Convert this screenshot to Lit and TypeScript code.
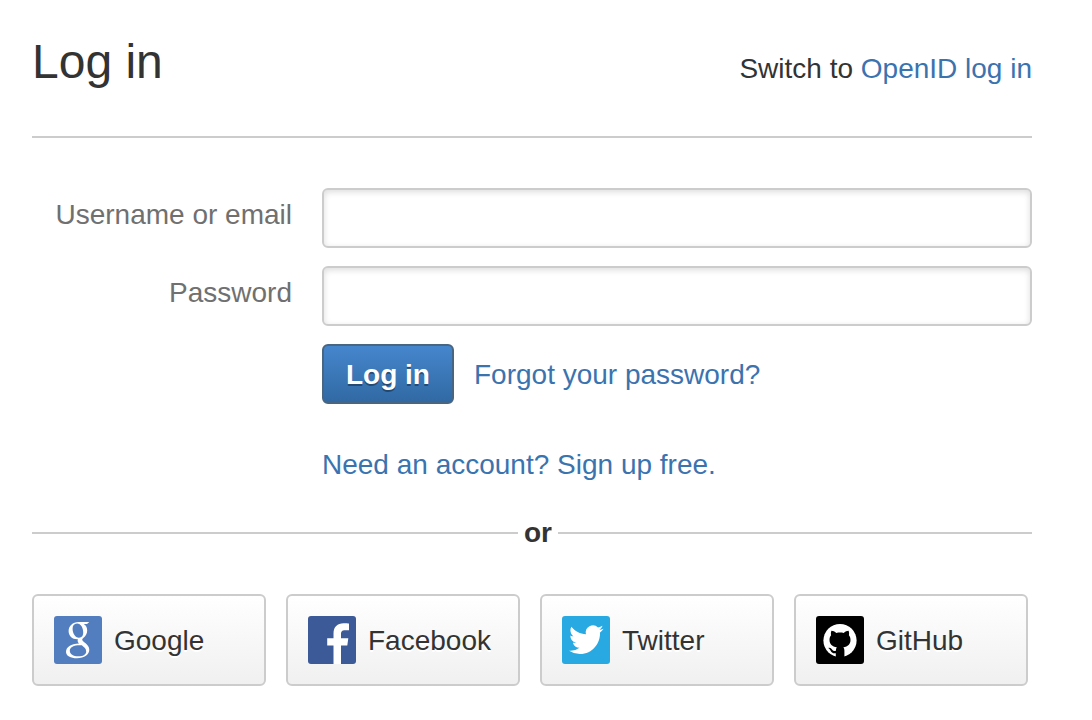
import { LitElement, html, css, svg } from "lit";
import { customElement } from "lit/decorators.js";

const providers = [
  {
    name: "Google",
    icon: svg`<rect width="48" height="48" rx="3" fill="#527dbf"/>
      <path fill="#fff" fill-rule="evenodd" d="M24.500 6H35.300L33 8H29.800C32.200 9.600 33.200 11.800 33.200 14.600C33.200 18 31.500 20.200 29.500 21.800C27.800 23.100 27.800 24.200 29.400 25.500C32.500 28 35.300 30 35.300 33.800C35.300 38.600 30.500 42.300 23 42.300C16.500 42.300 12 39.800 12 36C12 31 17 28.200 25 27.600C23.700 26.200 23.300 24.800 23.900 23.200C18.500 23.600 14.600 19.800 14.600 15.200C14.600 10 18.700 6 24.500 6ZM23 7.500C20 7.500 18.600 9.600 18.600 12.800C18.600 17.200 21 21.700 25 21.700C28 21.700 29.200 19.400 29.200 16.500C29.200 12 27 7.500 23 7.500ZM26 29.200C19.500 29.200 15.800 31.200 15.800 34.800C15.800 38.300 19.300 40.300 24.300 40.300C29.300 40.300 32.200 38.400 32.200 35.400C32.200 32.700 30.200 31.200 27.800 29.300Z"/>`,
  },
  {
    name: "Facebook",
    icon: svg`<rect width="48" height="48" rx="3" fill="#3c5998"/>
      <path fill="#fff" d="M25.500 48V29.500H19.200V22.300H25.500V17.500C25.500 11 29.500 7.300 35.500 7.300C38 7.300 40 7.400 41 7.600V14.200H37.200C33.800 14.200 33 15.700 33 18.200V22.300H40.300L39.300 29.500H33V48Z"/>`,
  },
  {
    name: "Twitter",
    icon: svg`<rect width="48" height="48" rx="3" fill="#28a9e2"/>
      <path fill="#fff" transform="translate(7 6) scale(1.440 1.470)" d="M23.953 4.570a10 10 0 01-2.825.775 4.958 4.958 0 002.163-2.723c-.951.555-2.005.959-3.127 1.184a4.920 4.920 0 00-8.384 4.482C7.690 8.095 4.067 6.130 1.640 3.162a4.822 4.822 0 00-.666 2.475c0 1.710.870 3.213 2.188 4.096a4.904 4.904 0 01-2.228-.616v.060a4.923 4.923 0 003.946 4.827 4.996 4.996 0 01-2.212.085 4.936 4.936 0 004.604 3.417 9.867 9.867 0 01-6.102 2.105c-.390 0-.779-.023-1.170-.067a13.995 13.995 0 007.557 2.209c9.053 0 13.998-7.496 13.998-13.985 0-.210 0-.420-.015-.630A9.935 9.935 0 0024 4.590z"/>`,
  },
  {
    name: "GitHub",
    icon: svg`<rect width="48" height="48" rx="3" fill="#000"/>
      <circle cx="24" cy="24.500" r="16.600" fill="#fff"/>
      <path d="M15.400 14.800C17 14.800 18.800 15.700 20.300 16.900C22.600 16.400 25.400 16.400 27.700 16.900C29.200 15.700 31 14.800 32.600 14.800C33.200 16.400 33.200 18 32.900 19.300C34 20.600 34.500 22 34.500 23.800C34.500 28.600 31.800 30.600 27.400 31.300C28.100 32.200 28.400 33.200 28.400 34.400V42H19.800V37.200C16.800 37.600 15.500 36.400 14.500 34.400C13.900 33.200 13.200 32.500 12.300 31.900C13.900 31.300 15.300 32.400 16.200 33.700C17.100 35 18.300 35.300 19.900 34.700C19.900 33.300 20.200 32.200 20.800 31.300C16.300 30.600 13.500 28.600 13.500 23.800C13.500 22 14 20.600 15.100 19.300C14.800 18 14.800 16.400 15.400 14.800Z"/>`,
  },
];

@customElement("app-root")
export class AppRoot extends LitElement {
  static styles = css`
    :host {
      display: block;
      box-sizing: border-box;
      padding: 34px 60px 32px 32px;
      background: #fff;
      color: #333;
      font-family: "Liberation Sans", Arial, sans-serif;
      font-size: 28px;
      line-height: 36px;
    }
    a {
      color: #3b73af;
      text-decoration: none;
    }
    .head {
      display: flex;
      align-items: baseline;
      justify-content: space-between;
      padding-bottom: 46px;
      border-bottom: 2px solid #ccc;
    }
    .title {
      margin: 0;
      font-size: 48px;
      font-weight: normal;
      line-height: 56px;
    }
    .switch {
      margin: 0;
    }
    .form {
      display: grid;
      grid-template-columns: 260px 1fr;
      gap: 18px 30px;
      padding-top: 50px;
    }
    .label {
      color: #707070;
      line-height: 54px;
      text-align: right;
      white-space: nowrap;
    }
    .field {
      box-sizing: border-box;
      width: 100%;
      height: 60px;
      padding: 0 12px;
      border: 2px solid #ccc;
      border-radius: 6px;
      background: #fff;
      box-shadow: inset 0 2px 6px rgba(0, 0, 0, 0.14);
      color: #333;
      font: inherit;
    }
    .actions {
      grid-column: 2;
      display: flex;
      align-items: baseline;
      gap: 20px;
    }
    .submit {
      height: 60px;
      padding: 2px 22px 0;
      border: 2px solid #486581;
      border-radius: 6px;
      background: linear-gradient(#4687ce, #3068a2);
      background-origin: border-box;
      color: #fff;
      font: inherit;
      font-weight: bold;
      text-shadow: 0 2px 0 rgba(0, 0, 0, 0.35);
      white-space: nowrap;
    }
    .signup {
      grid-column: 2;
      margin: 25px 0 0;
    }
    .or {
      display: flex;
      align-items: center;
      gap: 6px;
      margin: 32px 0 43px;
      font-weight: bold;
    }
    .or::before,
    .or::after {
      content: "";
      height: 2px;
      background: #ccc;
    }
    .or::before {
      flex: 0 0 calc(50% - 14px);
    }
    .or::after {
      flex: 1;
    }
    .providers {
      display: grid;
      grid-template-columns: repeat(4, 1fr);
      gap: 20px;
      padding-right: 4px;
    }
    .provider {
      display: flex;
      align-items: center;
      gap: 12px;
      padding: 20px;
      border: 2px solid #ccc;
      border-radius: 6px;
      background: linear-gradient(#fff, #f0f0f0);
      color: #333;
      font: inherit;
      text-shadow: 0 2px 0 #fff;
    }
    .name {
      padding-top: 2px;
    }
    .icon {
      flex: none;
      width: 48px;
      height: 48px;
    }
  `;

  render() {
    return html`
      <header class="head">
        <h1 class="title">Log in</h1>
        <p class="switch">Switch to <a href="#openid">OpenID log in</a></p>
      </header>
      <form class="form" @submit=${(e: Event) => e.preventDefault()}>
        <label class="label" for="username">Username or email</label>
        <input class="field" id="username" type="text" autocomplete="username" />
        <label class="label" for="password">Password</label>
        <input class="field" id="password" type="password" autocomplete="current-password" />
        <div class="actions">
          <button class="submit" type="submit">Log in</button>
          <a href="#reset">Forgot your password?</a>
        </div>
        <p class="signup"><a href="#signup">Need an account? Sign up free.</a></p>
      </form>
      <div class="or">or</div>
      <div class="providers">
        ${providers.map(
          (p) => html`<button class="provider" type="button">
            <svg class="icon" viewBox="0 0 48 48" aria-hidden="true">${p.icon}</svg>
            <span class="name">${p.name}</span>
          </button>`
        )}
      </div>
    `;
  }
}
